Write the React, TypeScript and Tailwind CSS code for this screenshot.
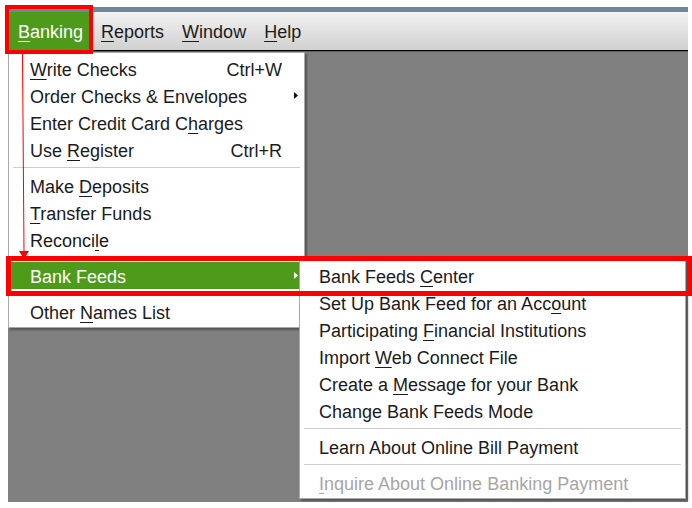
import React from "react";

type Item =
  | { kind: "sep" }
  | {
      kind: "item";
      pre: string;
      key?: string;
      post?: string;
      shortcut?: string;
      sub?: boolean;
      active?: boolean;
      disabled?: boolean;
    };

const bankingItems: Item[] = [
  { kind: "item", pre: "", key: "W", post: "rite Checks", shortcut: "Ctrl+W" },
  { kind: "item", pre: "Order Checks & Envelopes", sub: true },
  { kind: "item", pre: "Enter Credit Card C", key: "h", post: "arges" },
  { kind: "item", pre: "Use ", key: "R", post: "egister", shortcut: "Ctrl+R" },
  { kind: "sep" },
  { kind: "item", pre: "Make ", key: "D", post: "eposits" },
  { kind: "item", pre: "", key: "T", post: "ransfer Funds" },
  { kind: "item", pre: "Reconci", key: "l", post: "e" },
  { kind: "sep" },
  { kind: "item", pre: "Bank Feeds", sub: true, active: true },
  { kind: "sep" },
  { kind: "item", pre: "Other ", key: "N", post: "ames List" },
];

const feedItems: Item[] = [
  { kind: "item", pre: "Bank Feeds ", key: "C", post: "enter" },
  { kind: "item", pre: "Set Up Bank Feed for an Acc", key: "o", post: "unt" },
  { kind: "item", pre: "Participating ", key: "F", post: "inancial Institutions" },
  { kind: "item", pre: "Import ", key: "W", post: "eb Connect File" },
  { kind: "item", pre: "Create a ", key: "M", post: "essage for your Bank" },
  { kind: "item", pre: "Change Bank Feeds Mode" },
  { kind: "sep" },
  { kind: "item", pre: "Learn About Online Bill Payment" },
  { kind: "sep" },
  { kind: "item", pre: "", key: "I", post: "nquire About Online Banking Payment", disabled: true },
];

function Label({ pre, k, post }: { pre: string; k?: string; post?: string }) {
  return (
    <span className="whitespace-pre">
      {pre}
      {k && <span className="underline underline-offset-[3px] decoration-1">{k}</span>}
      {post}
    </span>
  );
}

function SubArrow({ white }: { white?: boolean }) {
  return (
    <svg width="4" height="7" viewBox="0 0 4 7" className="block">
      <path d="M0 0 L4 3.5 L0 7 Z" fill={white ? "#ffffff" : "#111111"} />
    </svg>
  );
}

function MenuList({ items, padLeft, withSlot }: { items: Item[]; padLeft: string; withSlot?: boolean }) {
  return (
    <div className="flex flex-col py-[2px]">
      {items.map((it, i) => {
        if (it.kind === "sep") {
          return (
            <div key={i} className="h-[9px] flex items-center px-[4px]">
              <div className="h-[1px] w-full bg-[#cdcdcd]" />
            </div>
          );
        }
        const tone = it.active
          ? "bg-[#4e9b1c] text-white"
          : it.disabled
          ? "text-[#a6a6a6]"
          : "text-[#1b1b1b]";
        return (
          <div
            key={i}
            className={`h-[27px] pt-[2px] flex items-center ${padLeft} ${withSlot ? "pr-[6px]" : "pr-[20px]"} ${tone}`}
          >
            <div className="flex-1">
              <Label pre={it.pre} k={it.key} post={it.post} />
            </div>
            {it.shortcut && <span>{it.shortcut}</span>}
            {withSlot && (
              <div className="w-[16px] -mt-[2px] flex justify-end">{it.sub && <SubArrow white={it.active} />}</div>
            )}
          </div>
        );
      })}
    </div>
  );
}

export default function App() {
  const bar = [
    { k: "R", rest: "eports" },
    { k: "W", rest: "indow" },
    { k: "H", rest: "elp" },
  ];
  return (
    <div className="relative w-[692px] h-[508px] bg-white overflow-hidden text-[18px] leading-none font-['Liberation_Sans',Arial,sans-serif]">
      {/* application window */}
      <div className="ml-[8px] mt-[7px] w-[680px] h-[495px] flex flex-col">
        <div className="h-[5px] bg-[#6b8798]" />
        <div className="h-[38px] pt-[2px] flex items-stretch bg-linear-to-b from-[#f2f2f2] to-[#d1d1d1] text-[#1b1b1b]">
          <div className="flex items-center pl-[10px] pr-[7px] -mt-[2px] pt-[2px] bg-[#4e9b1c] text-white">
            <Label pre="" k="B" post="anking" />
          </div>
          {bar.map((b) => (
            <div key={b.k} className="flex items-center pl-[11px] pr-[7px]">
              <Label pre="" k={b.k} post={b.rest} />
            </div>
          ))}
        </div>
        <div className="h-[1px] bg-black" />
        <div className="h-[1px] bg-[#5e5e5e]" />
        <div className="flex-1 bg-[#808080]" />
      </div>

      {/* Banking drop-down */}
      <div className="absolute left-[8px] top-[52px] w-[297px] h-[276px] bg-white border border-[#a9a9a9] shadow-[2px_2px_2px_rgba(0,0,0,0.35)]">
        <MenuList items={bankingItems} padLeft="pl-[21px]" withSlot />
      </div>

      {/* Bank Feeds submenu */}
      <div className="absolute left-[299px] top-[259px] w-[387px] h-[240px] bg-white border border-[#a9a9a9] shadow-[2px_2px_2px_rgba(0,0,0,0.35)]">
        <MenuList items={feedItems} padLeft="pl-[19px]" />
      </div>

      {/* callout marks */}
      <div className="absolute left-[5px] top-[5px] w-[88px] h-[49px] border-4 border-[#ff0000]" />
      <div className="absolute left-[6px] top-[256px] w-[686px] h-[40px] border-[5px] border-[#ff0000]" />
      <svg className="absolute left-0 top-0 pointer-events-none" width="692" height="508" viewBox="0 0 692 508">
        <line x1="22.5" y1="54" x2="24" y2="252" stroke="#ff0000" strokeWidth="1" />
        <path d="M19 251 L29 251 L24 259 Z" fill="#ff0000" />
      </svg>
    </div>
  );
}
